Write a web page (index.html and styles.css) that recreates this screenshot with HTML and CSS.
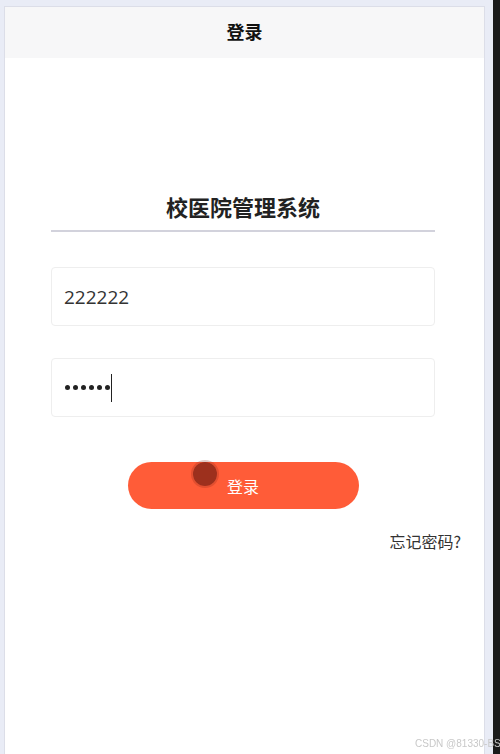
FILE: index.html
```html
<!DOCTYPE html>
<html>
  <head>
    <meta charset="UTF-8">
    <title>登录</title>
    <link rel="stylesheet" href="styles.css">
  </head>
  <body>
    <div id="phone">
      <div class="nav-bar">登录</div>
      <div class="login-body">
        <h1 class="app-title">校医院管理系统</h1>
        <div class="field">
          <input class="field-input" type="text" value="222222">
        </div>
        <div class="field">
          <div class="field-input password">
            <span class="dot"></span><span class="dot"></span><span class="dot"></span>
            <span class="dot"></span><span class="dot"></span><span class="dot"></span>
            <span class="caret"></span>
          </div>
        </div>
        <div class="btn-wrap">
          <button class="login-btn">登录</button>
          <span class="touch-dot"></span>
        </div>
        <div class="forgot">忘记密码?</div>
      </div>
    </div>
    <div class="side-bar"></div>
    <div class="watermark">CSDN @81330-BS</div>
  </body>
</html>
```

FILE: styles.css
```css
/* page frame */
html, body {
  margin: 0;
  height: 100%;
}

body {
  background-color: #e9ecf6;
  font-family: "Noto Sans CJK SC", "Noto Sans", sans-serif;
  color: #333;
  overflow: hidden;
  padding: 6px 0 0 4px;
  box-sizing: border-box;
}

#phone {
  width: 481px;
  height: 748px;
  background-color: #fff;
  border: 1px solid #dcdee8;
  border-bottom: none;
  box-sizing: border-box;
  overflow: hidden;
}

.side-bar {
  position: fixed;
  right: 0;
  top: 0;
  bottom: 0;
  width: 7px;
  background-color: #1b1b1b;
  z-index: 5;
}

/* header */
.nav-bar {
  height: 51px;
  padding-bottom: 3px;
  box-sizing: border-box;
  background-color: #f7f7f8;
  display: flex;
  justify-content: center;
  align-items: center;
  font-size: 18px;
  font-weight: bold;
  color: #111;
}

/* form */
.login-body {
  padding: 0 49px 0 46px;
}

.app-title {
  margin: 132px 0 0 0;
  padding-bottom: 8px;
  text-align: center;
  font-size: 22px;
  font-weight: bold;
  color: #222;
  border-bottom: 2px solid #d2d2dc;
}

.field {
  margin-top: 35px;
}

.field + .field {
  margin-top: 32px;
}

.field-input {
  display: block;
  width: 100%;
  height: 59px;
  box-sizing: border-box;
  border: 1px solid #eeeeee;
  border-radius: 4px;
  padding: 0 12px;
  font-family: "Open Sans", "Noto Sans", sans-serif;
  font-size: 19px;
  color: #333;
  background: #fff;
  outline: none;
}

.password {
  display: flex;
  align-items: center;
  gap: 3px;
  padding-left: 13px;
}

.dot {
  width: 5px;
  height: 5px;
  border-radius: 50%;
  background-color: #222;
}

.caret {
  width: 1px;
  height: 28px;
  margin-left: -2px;
  background-color: #222;
}

.btn-wrap {
  position: relative;
  margin-top: 45px;
  display: flex;
  justify-content: center;
}

.login-btn {
  width: 231px;
  height: 47px;
  border: none;
  border-radius: 24px;
  background-color: #ff5c38;
  color: #fff;
  font-family: "Noto Sans CJK SC", sans-serif;
  font-size: 16px;
  cursor: pointer;
}

.touch-dot {
  position: absolute;
  left: 142px;
  top: 0;
  width: 24px;
  height: 24px;
  border-radius: 50%;
  background-color: rgba(140, 40, 25, 0.85);
  box-shadow: 0 0 0 2px rgba(140, 40, 25, 0.25);
}

.forgot {
  margin-top: 20px;
  margin-right: -26px;
  text-align: right;
  font-size: 16px;
  color: #333;
}

.watermark {
  position: fixed;
  left: 415px;
  bottom: 5px;
  z-index: 6;
  font-family: "Liberation Sans", sans-serif;
  font-size: 10px;
  color: #c8c8c8;
  white-space: nowrap;
}
```
